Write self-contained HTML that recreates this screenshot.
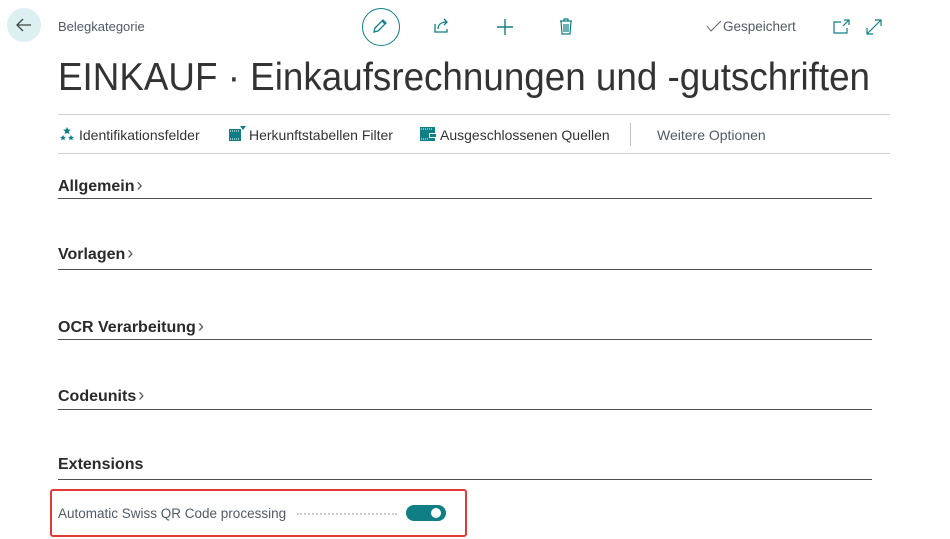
<!DOCTYPE html>
<html><head><meta charset="utf-8"><style>
body{margin:0;width:950px;height:539px;background:#fff;font-family:"Liberation Sans",sans-serif;position:relative;overflow:hidden;color:#212121}
.a{position:absolute}
.sec{position:absolute;left:58px;font-size:16px;font-weight:bold;color:#2a2a2a}
.sec span{font-weight:normal;color:#555;margin-left:2px;font-size:18px}
.line{position:absolute;left:58px;width:814px;height:1px;background:#505050}
.tb{position:absolute;top:127px;font-size:14px;color:#333}
</style></head><body>
<div class="a" style="left:7px;top:8px;width:34px;height:34px;border-radius:50%;background:#dcf0f2"></div>
<svg class="a" style="left:14px;top:15px" width="20" height="20" viewBox="0 0 20 20"><path d="M17 10H3M9 4L3 10l6 6" stroke="#444" stroke-width="1.3" fill="none"/></svg>
<div class="a" style="left:58px;top:19px;font-size:13px;color:#505a66">Belegkategorie</div>
<div class="a" style="left:362px;top:8px;width:36px;height:36px;border:1.3px solid #0f7f85;border-radius:50%"></div>
<svg class="a" style="left:370px;top:16px" width="20" height="20" viewBox="0 0 20 20"><path d="M4 16l1-4 8-8 3 3-8 8zM12 5l3 3" stroke="#0f7f85" stroke-width="1.3" fill="none"/></svg>
<svg class="a" style="left:433px;top:17px" width="18" height="18" viewBox="0 0 18 18"><path d="M2 7v8h12v-3M5 12c0-5 4-7 9-7M11 2l3 3-3 3" stroke="#0f7f85" stroke-width="1.3" fill="none"/></svg>
<svg class="a" style="left:496px;top:18px" width="18" height="18" viewBox="0 0 18 18"><path d="M9 1v16M1 9h16" stroke="#0f7f85" stroke-width="1.4"/></svg>
<svg class="a" style="left:558px;top:17px" width="16" height="18" viewBox="0 0 16 18"><path d="M2 4h12M6 4V2h4v2M3 4l1 13h8l1-13M6 7v8M8 7v8M10 7v8" stroke="#0f7f85" stroke-width="1.2" fill="none"/></svg>
<svg class="a" style="left:706px;top:20px" width="16" height="12" viewBox="0 0 16 12"><path d="M1 6l4 5 10-10" stroke="#666" stroke-width="1" fill="none"/></svg>
<div class="a" style="left:723px;top:19px;font-size:13.5px;color:#505a66">Gespeichert</div>
<svg class="a" style="left:833px;top:19px" width="18" height="16" viewBox="0 0 18 16"><path d="M8 3H1v11h13V9M11 1h5v5M16 1l-6 6" stroke="#0f7f85" stroke-width="1.2" fill="none"/></svg>
<svg class="a" style="left:865px;top:18px" width="18" height="18" viewBox="0 0 18 18"><path d="M2 16L16 2M10 2h6v6M2 10v6h6" stroke="#0f7f85" stroke-width="1.2" fill="none"/></svg>
<svg class="a" style="left:0;top:50px" width="950" height="50"><text x="58" y="40" textLength="812" lengthAdjust="spacingAndGlyphs" font-family="Liberation Sans" font-size="39" fill="#333">EINKAUF · Einkaufsrechnungen und -gutschriften</text></svg>
<div class="a" style="left:58px;top:114px;width:832px;height:1px;background:#d0d0da"></div>
<div class="a" style="left:58px;top:153px;width:832px;height:1px;background:#d0d0da"></div>
<div class="a" style="left:630px;top:123px;width:1px;height:23px;background:#c0c0c8"></div>
<svg class="a" style="left:59px;top:126px" width="16" height="16" viewBox="0 0 16 16"><g fill="#0f7f85"><path d="M8 1l1.2 2.5 2.6.3-2 1.8.6 2.6L8 6.9 5.6 8.2l.6-2.6-2-1.8 2.6-.3z"/><path d="M4 9l.9 1.8 2 .2-1.5 1.3.4 2L4 13.3 2.2 14.3l.4-2L1.1 11l2-.2z"/><path d="M12 9l.9 1.8 2 .2-1.5 1.3.4 2-1.8-1-1.8 1 .4-2L9.1 11l2-.2z"/></g></svg>
<div class="tb" style="left:79px">Identifikationsfelder</div>
<svg class="a" style="left:229px;top:126px" width="17" height="16" viewBox="0 0 17 16"><path d="M0 3h12v12H0z" fill="#0f7f85"/><path d="M11 0h6l-3 4z" fill="#0f7f85"/><path d="M1 5h1M3 5h1M5 5h1M7 5h1M9 5h1M1 13h1M3 13h1M5 13h1M7 13h1M9 13h1" stroke="#fff"/></svg>
<div class="tb" style="left:249px">Herkunftstabellen Filter</div>
<svg class="a" style="left:420px;top:127px" width="17" height="14" viewBox="0 0 17 14"><path d="M0 0h15v14H0z" fill="#0f7f85"/><path d="M9 6h8v5H9z" fill="#fff"/><path d="M10 7h6v3h-6z" fill="#0f7f85"/><path d="M1 2h1M3 2h1M5 2h1M7 2h1M9 2h1M11 2h1M1 12h1M3 12h1M5 12h1M7 12h1" stroke="#fff"/></svg>
<div class="tb" style="left:440px">Ausgeschlossenen Quellen</div>
<div class="tb" style="left:657px;color:#505a66">Weitere Optionen</div>
<div class="sec" style="top:175px">Allgemein<span>&#8250;</span></div><div class="line" style="top:198px"></div>
<div class="sec" style="top:243px">Vorlagen<span>&#8250;</span></div><div class="line" style="top:269px"></div>
<div class="sec" style="top:316px">OCR Verarbeitung<span>&#8250;</span></div><div class="line" style="top:339px"></div>
<div class="sec" style="top:385px">Codeunits<span>&#8250;</span></div><div class="line" style="top:409px"></div>
<div class="sec" style="top:456px">Extensions</div><div class="line" style="top:479px"></div>
<div class="a" style="left:50px;top:489px;width:413px;height:44px;border:2.5px solid #e53935;border-radius:3px"></div>
<div class="a" style="left:58px;top:506px;font-size:13.5px;color:#505a66">Automatic Swiss QR Code processing</div>
<div class="a" style="left:297px;top:513px;width:100px;border-top:2px dotted #ccc"></div>
<div class="a" style="left:406px;top:505px;width:40px;height:16px;border-radius:8px;background:#0f7f85"></div>
<div class="a" style="left:431px;top:508px;width:10px;height:10px;border-radius:50%;background:#fff"></div>
</body></html>
